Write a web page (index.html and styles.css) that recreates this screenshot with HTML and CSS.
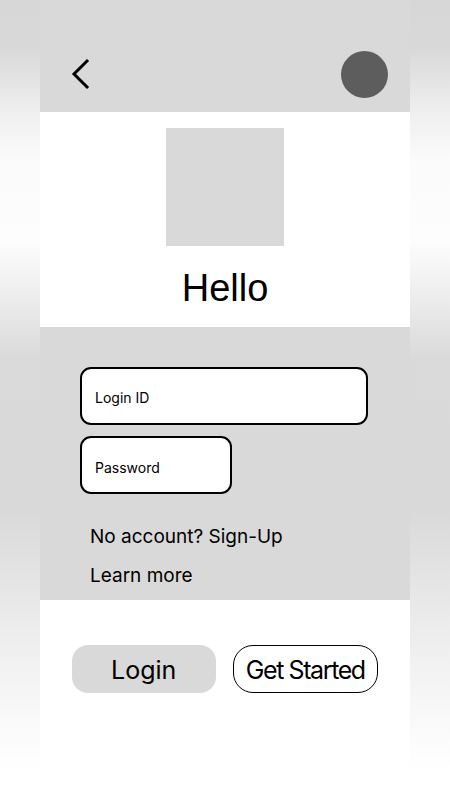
FILE: index.html
```html
<!DOCTYPE html>
<html lang="en">

<head>
    <meta charset="UTF-8">
    <title>Hello - Login</title>
    <link rel="stylesheet" href="styles.css">
</head>

<body>

    <div id="phone">
        <div id="top-bar">
            <button class="back-btn" aria-label="Back">
                <svg width="20" height="32" viewBox="0 0 20 32">
                    <path d="M16 3 L3 16 L16 29" fill="none" stroke="#000" stroke-width="3" stroke-linecap="square" stroke-linejoin="miter" />
                </svg>
            </button>
            <div class="avatar"></div>
        </div>

        <div id="hero">
            <div class="logo-box"></div>
            <h1 class="title">Hello</h1>
        </div>

        <div id="login-form">
            <div class="field field-wide">Login ID</div>
            <div class="field field-short">Password</div>
            <a class="form-link" href="#">No account? Sign-Up</a>
            <a class="form-link" href="#">Learn more</a>
        </div>

        <div id="actions">
            <button class="action-btn login-btn">Login</button>
            <button class="action-btn start-btn">Get Started</button>
        </div>
    </div>

</body>

</html>
```

FILE: styles.css
```css
body {
    margin: 0;
    min-height: 800px;
    font-family: 'Inter', 'Liberation Sans', sans-serif;
    color: #000;
    background: linear-gradient(to bottom,
            #d6d6d6 0,
            #d9d9d9 50px,
            #eeeeee 110px,
            #fbfbfb 160px,
            #fdfdfd 240px,
            #ececec 300px,
            #dadada 356px,
            #d9d9d9 510px,
            #ebebeb 620px,
            #f9f9f9 720px,
            #ffffff 770px);
}

#phone {
    width: 370px;
    min-height: 800px;
    margin: 0 auto;
    background: white;
    display: flex;
    flex-direction: column;
}

#top-bar {
    height: 112px;
    background: #d9d9d9;
    display: flex;
    align-items: center;
    justify-content: space-between;
    padding: 36px 22px 0 31px;
    box-sizing: border-box;
}

.back-btn {
    background: none;
    border: none;
    padding: 0;
    cursor: pointer;
    display: flex;
}

.avatar {
    width: 47px;
    height: 47px;
    border-radius: 50%;
    background: #5d5d5d;
}

#hero {
    height: 215px;
    display: flex;
    flex-direction: column;
    align-items: center;
    padding-top: 16px;
    box-sizing: border-box;
}

.logo-box {
    width: 118px;
    height: 118px;
    background: #d9d9d9;
}

.title {
    margin: 20px 0 0;
    font-family: 'Liberation Sans', Arial, sans-serif;
    font-size: 38px;
    font-weight: normal;
    line-height: 44px;
}

#login-form {
    height: 273px;
    background: #d9d9d9;
    padding: 40px 0 0 40px;
    box-sizing: border-box;
    display: flex;
    flex-direction: column;
    align-items: flex-start;
}

.field {
    height: 58px;
    box-sizing: border-box;
    border: 2px solid #000;
    border-radius: 11px;
    background: white;
    padding: 2px 0 0 13px;
    font-size: 14px;
    display: flex;
    align-items: center;
}

.field-wide {
    width: 288px;
}

.field-short {
    width: 152px;
    margin-top: 11px;
    padding-top: 4px;
}

.field-short + .form-link {
    margin-top: 23px;
}

.form-link {
    margin-left: 10px;
    font-size: 19px;
    line-height: 39px;
    color: #000;
    text-decoration: none;
}

#actions {
    flex: 1;
    display: flex;
    gap: 17px;
    padding: 45px 32px 0;
    align-items: flex-start;
}

.action-btn {
    flex: 1;
    height: 48px;
    font-family: 'Inter', sans-serif;
    font-size: 25px;
    color: #000;
    cursor: pointer;
    padding: 2px 0 0;
}

.login-btn {
    background: #d9d9d9;
    border: none;
    border-radius: 16px;
}

.start-btn {
    background: white;
    border: 1px solid #000;
    border-radius: 20px;
    letter-spacing: -1.4px;
}
```
